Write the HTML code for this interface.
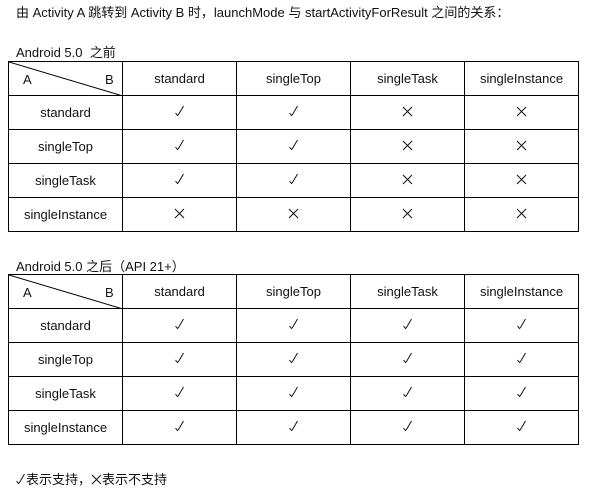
<!DOCTYPE html>
<html><head><meta charset="utf-8"><style>
body{margin:0;width:591px;height:493px;background:#fff;font-family:"Liberation Sans","Noto Sans CJK SC",sans-serif;font-size:13px;color:#111;position:relative;overflow:hidden}
.t{position:absolute;white-space:nowrap}
table{position:absolute;left:8px;border-collapse:collapse;table-layout:fixed}
td{border:1px solid #000;width:113px;height:33px;padding:0;text-align:center;vertical-align:middle}
td.d{position:relative}
td.d svg{position:absolute;left:0;top:0}
.c{display:inline-block;width:10px;height:12px}
</style></head><body>
<div class="t" style="left:16px;top:2px">由 Activity A 跳转到 Activity B 时，launchMode 与 startActivityForResult 之间的关系：</div>
<div class="t" style="left:16px;top:42px">Android 5.0&nbsp; 之前</div>
<div class="t" style="left:16px;top:256px">Android 5.0 之后（API 21+）</div>
<div class="t" style="left:16px;top:469px"><svg width="10" height="12" viewBox="0 0 10 12" style="vertical-align:-1px"><path d="M0.5,8 L2.5,10.5 L3.5,9.5 L8.5,1" fill="none" stroke="#111" stroke-width="1"/></svg>表示支持，<svg width="11" height="11" viewBox="0 0 11 11" style="vertical-align:-1px"><path d="M1,1 L10,10 M10,1 L1,10" stroke="#111" stroke-width="1"/></svg>表示不支持</div>
<script>
var V='<svg class="c" viewBox="0 0 10 12"><path d="M0.5,8 L2.5,10.5 L3.5,9.5 L8.5,1" fill="none" stroke="#111" stroke-width="1"/></svg>';
var X='<svg class="c" viewBox="0 0 11 11" style="width:11px;height:11px"><path d="M1,1 L10,10 M10,1 L1,10" stroke="#111" stroke-width="1"/></svg>';
var rows=['standard','singleTop','singleTask','singleInstance'];
function tbl(top,m){
 var h='<table style="top:'+top+'px"><tr><td class="d"><svg width="114" height="35"><line x1="0" y1="0" x2="114" y2="34" stroke="#000" stroke-width="1"/><text x="14" y="22" font-size="13" font-family="Liberation Sans" fill="#111">A</text><text x="96" y="22" font-size="13" font-family="Liberation Sans" fill="#111">B</text></svg></td>';
 rows.forEach(function(r){h+='<td>'+r+'</td>'});h+='</tr>';
 rows.forEach(function(r,i){h+='<tr><td>'+r+'</td>';for(var j=0;j<4;j++)h+='<td>'+(m[i][j]?V:X)+'</td>';h+='</tr>'});
 return h+'</table>';
}
document.write(tbl(61,[[1,1,0,0],[1,1,0,0],[1,1,0,0],[0,0,0,0]]));
document.write(tbl(274,[[1,1,1,1],[1,1,1,1],[1,1,1,1],[1,1,1,1]]));
</script>
</body></html>
